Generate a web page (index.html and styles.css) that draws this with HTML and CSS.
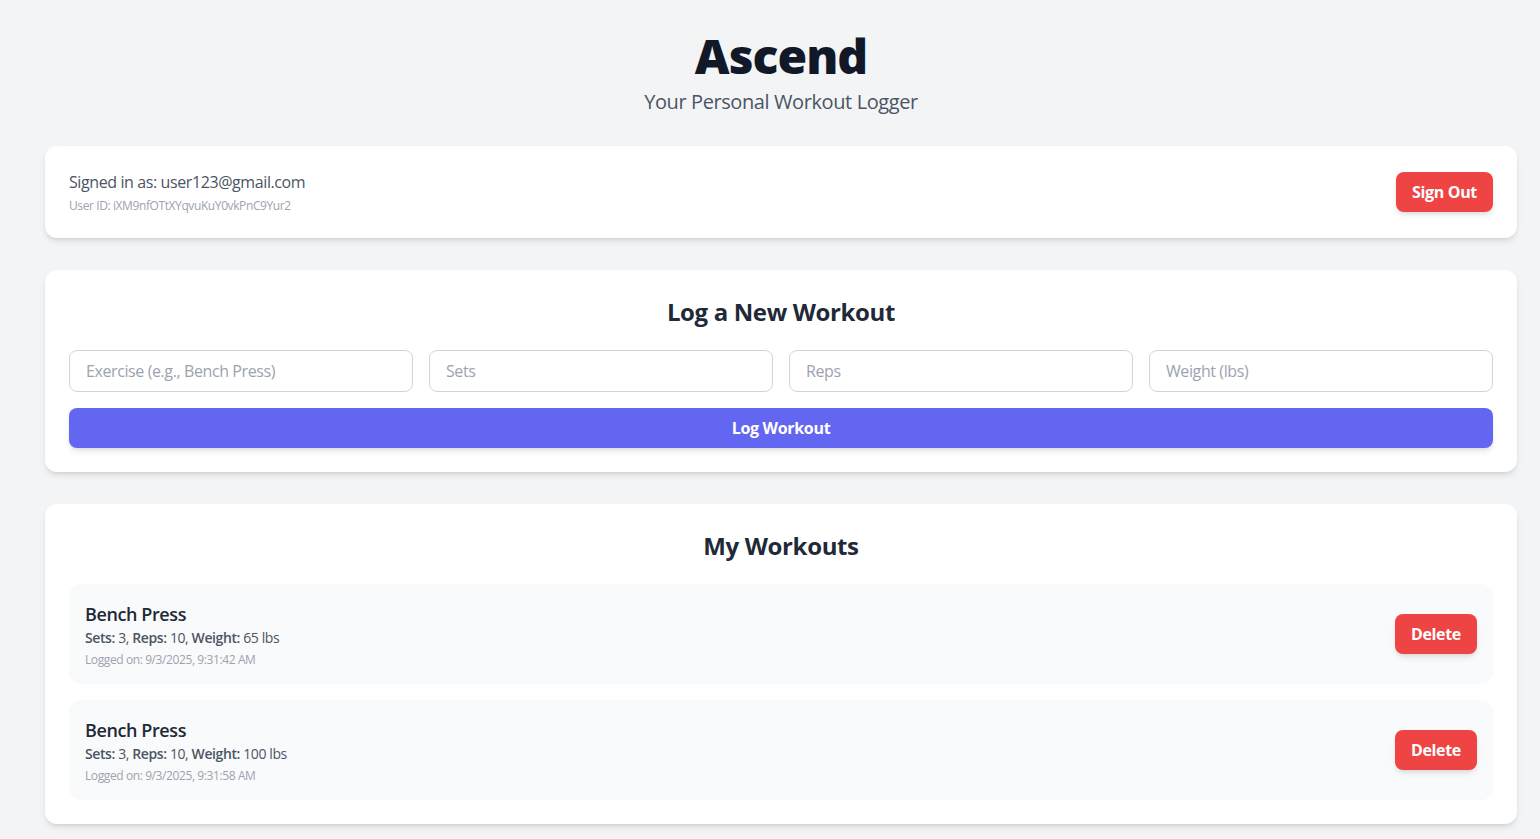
FILE: index.html
```html
<!DOCTYPE html>
<html lang="en">
<head>
<meta charset="utf-8">
<title>Ascend</title>
<link rel="stylesheet" href="styles.css">
</head>
<body>
<main class="page">
  <header class="hero">
    <h1 class="brand">Ascend</h1>
    <p class="tagline">Your Personal Workout Logger</p>
  </header>

  <section class="card account">
    <div class="account-info">
      <p class="signed">Signed in as: user123@gmail.com</p>
      <p class="uid">User ID: iXM9nfOTtXYqvuKuY0vkPnC9Yur2</p>
    </div>
    <button class="btn btn-red">Sign Out</button>
  </section>

  <section class="card">
    <h2 class="card-title">Log a New Workout</h2>
    <div class="fields">
      <input class="field" type="text" placeholder="Exercise (e.g., Bench Press)">
      <input class="field" type="text" placeholder="Sets">
      <input class="field" type="text" placeholder="Reps">
      <input class="field" type="text" placeholder="Weight (lbs)">
    </div>
    <button class="btn btn-indigo">Log Workout</button>
  </section>

  <section class="card">
    <h2 class="card-title">My Workouts</h2>
    <ul class="workouts">
      <li class="workout">
        <div class="workout-info">
          <h3 class="workout-name">Bench Press</h3>
          <p class="workout-stats"><b>Sets:</b> 3, <b>Reps:</b> 10, <b>Weight:</b> 65 lbs</p>
          <p class="workout-date">Logged on: 9/3/2025, 9:31:42 AM</p>
        </div>
        <button class="btn btn-red">Delete</button>
      </li>
      <li class="workout">
        <div class="workout-info">
          <h3 class="workout-name">Bench Press</h3>
          <p class="workout-stats"><b>Sets:</b> 3, <b>Reps:</b> 10, <b>Weight:</b> 100 lbs</p>
          <p class="workout-date">Logged on: 9/3/2025, 9:31:58 AM</p>
        </div>
        <button class="btn btn-red">Delete</button>
      </li>
    </ul>
  </section>
</main>
</body>
</html>
```

FILE: styles.css
```css
* { box-sizing: border-box; }

html, body {
  margin: 0;
  padding: 0;
  background: #f3f4f6;
}

body {
  font-family: "Open Sans", "Noto Sans", sans-serif;
  color: #1f2937;
  letter-spacing: -0.025em;
}

.page {
  padding: 32px 23px 15px 45px;
  display: flex;
  flex-direction: column;
  gap: 32px;
}

.hero {
  text-align: center;
  margin-bottom: -2px;
}

.brand {
  margin: 0;
  font-size: 48px;
  line-height: 48px;
  font-weight: 800;
  color: #111827;
  letter-spacing: -0.02em;
}

.tagline {
  margin: 8px 0 0;
  font-size: 20px;
  line-height: 28px;
  color: #4b5563;
}

.card {
  background: #ffffff;
  border-radius: 12px;
  padding: 24px;
  box-shadow: 0 4px 6px -1px rgba(0,0,0,0.1), 0 2px 4px -2px rgba(0,0,0,0.1);
}

.account {
  display: flex;
  align-items: center;
  justify-content: space-between;
}

.signed {
  margin: 0;
  font-size: 16px;
  line-height: 24px;
  color: #4b5563;
}

.uid {
  margin: 4px 0 0;
  font-size: 12px;
  line-height: 16px;
  color: #9ca3af;
}

.btn {
  font-family: inherit;
  letter-spacing: -0.02em;
  border: 0;
  border-radius: 8px;
  padding: 8px 16px;
  font-size: 16px;
  line-height: 24px;
  font-weight: 700;
  color: #ffffff;
  cursor: pointer;
  box-shadow: 0 4px 6px -1px rgba(0,0,0,0.1), 0 2px 4px -2px rgba(0,0,0,0.1);
}

.btn-red { background: #ef4444; }

.btn-indigo {
  background: #6366f1;
  width: 100%;
  display: block;
}

.card-title {
  margin: 0 0 24px;
  padding-top: 2px;
  height: 32px;
  text-align: center;
  font-size: 24px;
  line-height: 32px;
  font-weight: 700;
  color: #1f2937;
  letter-spacing: -0.015em;
}

.fields {
  display: grid;
  grid-template-columns: repeat(4, 1fr);
  gap: 16px;
  margin-bottom: 16px;
}

.field {
  font-family: inherit;
  letter-spacing: -0.025em;
  font-size: 16px;
  line-height: 24px;
  padding: 8px 16px;
  border: 1px solid #d1d5db;
  border-radius: 8px;
  color: #1f2937;
  background: #fff;
  width: 100%;
  outline: none;
}

.field::placeholder { color: #9ca3af; }

.workouts {
  list-style: none;
  margin: 0;
  padding: 0;
  display: flex;
  flex-direction: column;
  gap: 16px;
}

.workout {
  background: #f9fafb;
  border-radius: 12px;
  padding: 16px;
  display: flex;
  align-items: center;
  justify-content: space-between;
}

.workout-name {
  margin: 0;
  font-size: 18px;
  line-height: 28px;
  font-weight: 600;
  color: #1f2937;
}

.workout-stats {
  margin: 0;
  font-size: 14px;
  line-height: 20px;
  color: #4b5563;
}

.workout-stats b { font-weight: 600; }

.workout-date {
  margin: 4px 0 0;
  font-size: 12px;
  line-height: 16px;
  color: #9ca3af;
}
```
